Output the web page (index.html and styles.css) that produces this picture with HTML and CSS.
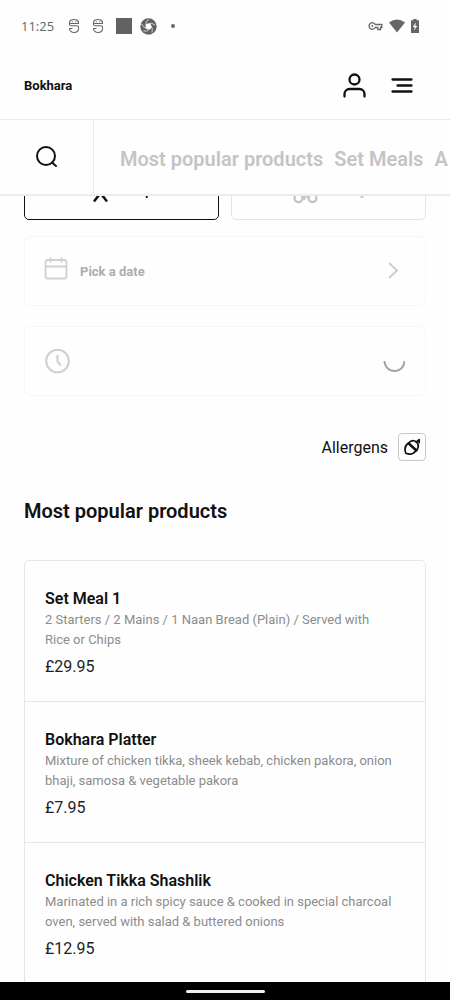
FILE: index.html
```html
<!DOCTYPE html>
<html lang="en">
<head>
<meta charset="utf-8">
<meta name="viewport" content="width=device-width, initial-scale=1">
<title>Bokhara</title>
<link rel="stylesheet" href="styles.css">
</head>
<body>
<div class="screen">
  <div class="status">
    <span class="clock">11:25</span>
    <svg class="s-app" width="12" height="16" viewBox="0 0 12 16" fill="none" stroke="#666" stroke-width="1.1"><path d="M10.500 6V5C10.500 2.500 9 1.500 6 1.500S1.500 2.500 1.500 5v1.200c0 1 .5 1.500 1.500 1.500h6c1 0 1.500.5 1.500 1.500v1.300c0 2.500-2 4-4.500 4s-4.500-1.500-4.500-4h3M1.500 5.500h9"/><path d="M3.800 3.800h1M7.200 3.800h1"/></svg>
    <svg class="s-app" width="12" height="16" viewBox="0 0 12 16" fill="none" stroke="#666" stroke-width="1.1"><path d="M10.500 6V5C10.500 2.500 9 1.500 6 1.500S1.500 2.500 1.500 5v1.200c0 1 .5 1.500 1.500 1.500h6c1 0 1.500.5 1.500 1.500v1.300c0 2.500-2 4-4.500 4s-4.500-1.500-4.500-4h3M1.500 5.500h9"/><path d="M3.800 3.800h1M7.200 3.800h1"/></svg>
    <span class="block"></span>
    <svg width="17" height="17" viewBox="0 0 17 17"><circle cx="8.500" cy="8.500" r="8.200" fill="#636163"/><circle cx="8.500" cy="8.500" r="2.900" fill="#fff"/><g fill="none" stroke="#fff" stroke-width=".7"><path d="M5.800 7.500Q5.500 4 8.500 1.200"/><path d="M8.500 5.500Q12 4.500 15 7"/><path d="M11.300 8Q13 11 12 14.500"/><path d="M9.500 11.300Q7 14 3.500 13"/><path d="M6.500 10.500Q3.500 9.500 1.500 6"/></g></svg>
    <span class="dot"></span>
    <span class="status-right">
      <svg width="15" height="10" viewBox="0 0 15 10" fill="none" stroke="#666" stroke-width="1.300"><path d="M7.300 3.500h6.500v3h-1.300v2h-2.700v-2H7.300A3.300 3.300 0 1 1 7.300 3.500Z"/><circle cx="4.300" cy="5" r="1" fill="#666" stroke="none"/></svg>
      <svg width="16" height="14" viewBox="0 0 16 14"><path d="M0 3.500Q8-2.500 16 3.500L8 13.500Z" fill="#666"/></svg>
      <svg width="8" height="14" viewBox="0 0 8 14"><path d="M2.300 0h3.400v1.300H8V14H0V1.300h2.300Z" fill="#666"/><path d="M4.800 3.500 1.800 8h2L3.200 11.500 6.300 7h-2Z" fill="#fff"/></svg>
    </span>
  </div>

  <header class="header">
    <a class="brand" href="#">Bokhara</a>
    <button class="icon-btn" type="button" aria-label="Account">
      <svg width="24" height="26" viewBox="0 0 24 26" fill="none" stroke="#111" stroke-width="2.300" stroke-linecap="round"><circle cx="12.500" cy="6.500" r="5"/><path d="M2.500 23.500V21a5 5 0 0 1 5-5h10a5 5 0 0 1 5 5v2.500"/></svg>
    </button>
    <button class="icon-btn" type="button" aria-label="Menu">
      <svg width="24" height="26" viewBox="0 0 24 26" fill="none" stroke="#111" stroke-width="2.300" stroke-linecap="round"><path d="M2.500 6.500h19M7.500 12.500h14M2.500 18.500h19"/></svg>
    </button>
  </header>

  <div class="tabs">
    <button class="search" type="button" aria-label="Search">
      <svg width="24" height="24" viewBox="0 0 24 24" fill="none" stroke="#111" stroke-width="2" stroke-linecap="round"><circle cx="11" cy="11" r="9"/><path d="m17 17.500 4 3.500"/></svg>
    </button>
    <nav class="tab-list">
      <a href="#popular">Most popular products</a>
      <a href="#set-meals">Set Meals</a>
      <a href="#more">A</a>
    </nav>
  </div>

  <main class="content">
    <div class="service">
      <button class="choice selected" type="button">
        <svg width="20" height="24" viewBox="0 0 20 24" fill="none" stroke="#111" stroke-width="2.500" stroke-linecap="butt" stroke-linejoin="round"><circle cx="10.500" cy="3" r="1.500"/><path d="M10.500 6v9M5 12l5.500-5 5.500 4M4 23.500l6.500-8.500 6.500 8.500"/></svg>
        Pickup
      </button>
      <button class="choice" type="button">
        <svg class="bike" width="26" height="28" viewBox="0 0 26 28" fill="none" stroke="#c4c4c4" stroke-width="2.300"><circle cx="8.500" cy="22" r="4"/><circle cx="22.500" cy="22" r="4"/><path d="M8.500 17 12 9h6l4.500 8M14 24l1-6M17 22l1-3"/></svg>
        Delivery
      </button>
    </div>

    <button class="picker" type="button">
      <svg width="24" height="30" viewBox="0 0 24 30" fill="none" stroke="#d0d0d0" stroke-width="1.800"><rect x="1.500" y="4" width="21" height="18.500" rx="2.500"/><path d="M1.500 10.500h21M6.500 1.500v5M17.500 1.500v5"/></svg>
      <span class="picker-label">Pick a date</span>
      <svg width="24" height="24" viewBox="0 0 24 24" fill="none" stroke="#cfcfcf" stroke-width="2"><path d="m8 4 8 7.500L8 19"/></svg>
    </button>
    <button class="picker" type="button" aria-label="Pick a time">
      <svg width="26" height="26" viewBox="0 0 26 26" fill="none" stroke="#d0d0d0" stroke-width="2.100"><circle cx="13.500" cy="13" r="11.300"/><path d="M13.500 7v6.500l3.500 4"/></svg>
      <span class="picker-label"></span>
      <svg width="22" height="24" viewBox="0 0 22 24" fill="none" stroke="#a2a2a2" stroke-width="1.900"><path d="M1.500 12a10 10 0 0 0 20 0"/></svg>
    </button>

    <div class="allergens">
      <span id="allergens-label">Allergens</span>
      <button class="allergen-btn" type="button" aria-labelledby="allergens-label">
        <svg width="18" height="18" viewBox="0 0 18 18" fill="none" stroke="#111" stroke-width="1.700" stroke-linecap="round" stroke-linejoin="round"><path d="M5 5.500C2 7.500 1.300 11 2.800 15.300 7 16.800 10.500 16 12.700 13"/><path d="M5.500 5C8 2.300 11 2 13.500 4c2.200 2.300 2.200 5.500.2 8.200"/><path d="m5.800 5.500 7.600 7" stroke-width="2.500"/><path d="m13.500 4 2.700-2.300v2.800" stroke-width="1.800"/></svg>
      </button>
    </div>

    <h1 class="section-title" id="popular">Most popular products</h1>
    <ul class="menu">
      <li class="item">
        <h2>Set Meal 1</h2>
        <p class="desc">2 Starters / 2 Mains / 1 Naan Bread (Plain) / Served with Rice or Chips</p>
        <p class="price">£29.95</p>
      </li>
      <li class="item">
        <h2>Bokhara Platter</h2>
        <p class="desc">Mixture of chicken tikka, sheek kebab, chicken pakora, onion bhaji, samosa &amp; vegetable pakora</p>
        <p class="price">£7.95</p>
      </li>
      <li class="item">
        <h2>Chicken Tikka Shashlik</h2>
        <p class="desc">Marinated in a rich spicy sauce &amp; cooked in special charcoal oven, served with salad &amp; buttered onions</p>
        <p class="price">£12.95</p>
      </li>
    </ul>
  </main>

  <div class="gesture"><span class="handle"></span></div>
</div>
</body>
</html>
```
FILE: styles.css
```css
* { box-sizing: border-box; }
body, h1, h2, p, ul { margin: 0; padding: 0; }
body {
  font-family: Roboto, "Liberation Sans", sans-serif;
  background: #fefefe;
  color: #111;
}
button {
  font: inherit;
  color: inherit;
  background: none;
  border: 0;
  padding: 0;
  cursor: pointer;
}
a { color: inherit; text-decoration: none; }
svg { display: block; flex: none; }

.screen {
  display: flex;
  flex-direction: column;
  height: 100vh;
  overflow: hidden;
}
.status {
  display: flex;
  align-items: center;
  flex: none;
  height: 52px;
  padding: 0 31px 0 21px;
  color: #666;
}
.clock {
  font-family: "Open Sans", Roboto, sans-serif;
  font-size: 13px;
  margin-right: 14px;
}
.s-app { margin-right: 12px; }
.block { width: 16px; height: 16px; background: #636163; margin-right: 8px; }
.dot { width: 4px; height: 4px; border-radius: 50%; background: #666; margin-left: 14px; }
.status-right {
  display: flex;
  align-items: center;
  gap: 6px;
  margin-left: auto;
}

.header {
  display: flex;
  align-items: center;
  gap: 24px;
  flex: none;
  height: 68px;
  padding: 0 36px 0 24px;
  border-bottom: 1px solid #e9e9e9;
}
.brand { font-size: 13px; font-weight: 700; margin-right: auto; }

.tabs {
  display: flex;
  flex: none;
  height: 76px;
  border-bottom: 2px solid #ececec;
  background: #fefefe;
  position: relative;
  z-index: 1;
}
.search {
  display: flex;
  align-items: center;
  justify-content: center;
  flex: none;
  width: 94px;
  border-right: 1px solid #e9e9e9;
}
.tab-list {
  display: flex;
  align-items: center;
  gap: 11px;
  min-width: 0;
  overflow: hidden;
  padding: 3px 0 0 26px;
  white-space: nowrap;
  font-size: 20px;
  font-weight: 600;
  color: #c4c4c4;
}

.content {
  flex: 1;
  min-height: 0;
  padding: 0 24px;
}
.service { display: flex; gap: 12px; margin: -36px 0 16px; }
.choice {
  display: flex;
  align-items: center;
  justify-content: center;
  flex: 1;
  height: 60px;
  border: 1px solid #e4e4e4;
  border-radius: 5px;
  font-size: 14px;
  font-weight: 600;
  color: #c4c4c4;
}
.choice.selected { border-color: #111; color: #111; }
.bike { overflow: visible; }

.picker {
  display: flex;
  align-items: center;
  width: 100%;
  height: 70px;
  padding: 0 20px 0 19px;
  margin-bottom: 20px;
  border: 1px solid #f6f6f6;
  border-radius: 5px;
}
.picker-label {
  flex: 1;
  padding-left: 12px;
  text-align: left;
  font-size: 13px;
  font-weight: 700;
  color: #adadad;
}

.allergens {
  display: flex;
  align-items: center;
  justify-content: flex-end;
  gap: 10px;
  margin-top: 37px;
  font-size: 16px;
}
.allergen-btn {
  display: flex;
  align-items: center;
  justify-content: center;
  width: 28px;
  height: 28px;
  border: 1px solid #c9c9c9;
  border-radius: 4px;
}

.section-title {
  margin: 36px 0 35px;
  font-size: 20px;
  line-height: 28px;
  font-weight: 600;
}
.menu {
  list-style: none;
  padding-bottom: 24px;
  border: 1px solid #e6e6e6;
  border-radius: 5px;
}
.item { padding: 26px 32px 22px 20px; }
.item + .item { border-top: 1px solid #e6e6e6; }
.item h2 { font-size: 16px; line-height: 23px; font-weight: 600; }
.desc { font-size: 13px; line-height: 20px; color: #8c8c8c; }
.price { margin-top: 5px; font-size: 16px; line-height: 24px; color: #222; }

.gesture {
  display: flex;
  align-items: center;
  justify-content: center;
  flex: none;
  height: 18px;
  background: #000;
  position: relative;
  z-index: 1;
}
.handle { width: 79px; height: 3px; border-radius: 2px; background: #eee; }
```
